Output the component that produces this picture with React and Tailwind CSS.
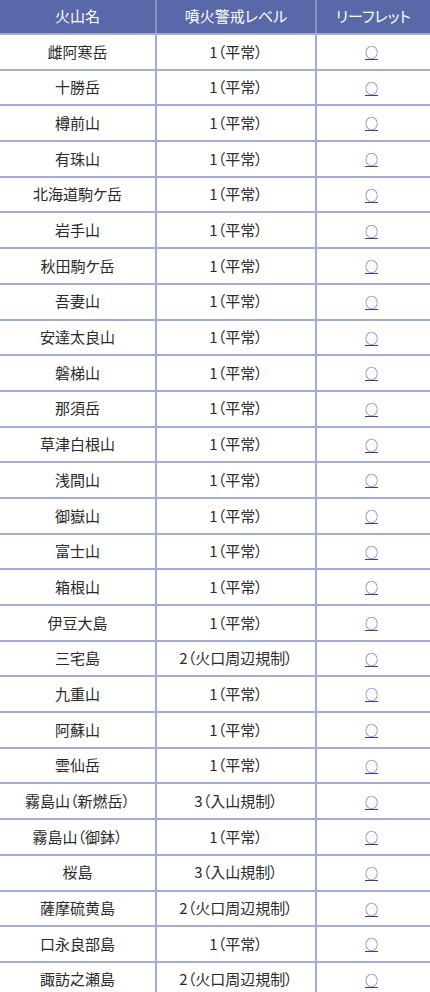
import React from 'react'

const rows = [
  ['雌阿寒岳', '1（平常）'],
  ['十勝岳', '1（平常）'],
  ['樽前山', '1（平常）'],
  ['有珠山', '1（平常）'],
  ['北海道駒ケ岳', '1（平常）'],
  ['岩手山', '1（平常）'],
  ['秋田駒ケ岳', '1（平常）'],
  ['吾妻山', '1（平常）'],
  ['安達太良山', '1（平常）'],
  ['磐梯山', '1（平常）'],
  ['那須岳', '1（平常）'],
  ['草津白根山', '1（平常）'],
  ['浅間山', '1（平常）'],
  ['御嶽山', '1（平常）'],
  ['富士山', '1（平常）'],
  ['箱根山', '1（平常）'],
  ['伊豆大島', '1（平常）'],
  ['三宅島', '2（火口周辺規制）'],
  ['九重山', '1（平常）'],
  ['阿蘇山', '1（平常）'],
  ['雲仙岳', '1（平常）'],
  ['霧島山（新燃岳）', '3（入山規制）'],
  ['霧島山（御鉢）', '1（平常）'],
  ['桜島', '3（入山規制）'],
  ['薩摩硫黄島', '2（火口周辺規制）'],
  ['口永良部島', '1（平常）'],
  ['諏訪之瀬島', '2（火口周辺規制）'],
]

export default function App() {
  return (
    <div className="w-[430px] min-h-[992px] overflow-hidden bg-white font-['Noto_Sans_CJK_JP','Noto_Sans',sans-serif] text-[15px] [font-feature-settings:'palt'] text-[#2a2a2a]">
      <div className="flex h-[33px] bg-[#5868a8] text-white">
        <div className="flex w-[155px] items-center justify-center">火山名</div>
        <div className="flex w-[160px] items-center justify-center border-l-2 border-[#8391c9]">噴火警戒レベル</div>
        <div className="flex flex-1 items-center justify-center border-l-2 border-[#8391c9]">リーフレット</div>
      </div>
      {rows.map(([name, level]) => (
        <div key={name} className="flex h-[35.69px] border-t-2 border-[#a2acd9]">
          <div className="flex w-[155px] items-center justify-center">{name}</div>
          <div className="flex w-[160px] items-center justify-center border-l-2 border-[#a2acd9]">{level}</div>
          <div className="flex flex-1 items-center justify-center border-l-2 border-[#a2acd9]">
            <a href="#" className="pr-[4px] text-[13px] text-[#3f3a9c] underline underline-offset-2">○</a>
          </div>
        </div>
      ))}
    </div>
  )
}
